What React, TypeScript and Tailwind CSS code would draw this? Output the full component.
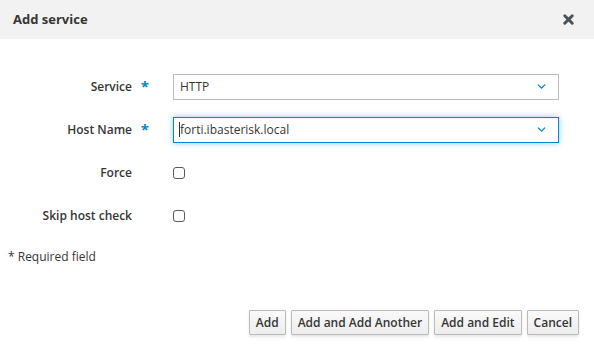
import { ChevronDown, X } from 'lucide-react'

function Select({ value, focused }: { value: string; focused?: boolean }) {
  return (
    <div
      className={
        focused
          ? 'flex h-[26px] w-[386px] items-center justify-between border border-[#0088ce] bg-white pl-[6px] pr-[10px] shadow-[0_0_6px_rgba(0,136,206,0.45)]'
          : 'flex h-[26px] w-[386px] items-center justify-between border border-[#bbbbbb] bg-white pl-[6px] pr-[10px]'
      }
    >
      <span className="relative text-[12px] text-[#363636]">
        {focused && <span className="absolute left-[-1px] top-[1px] h-[15px] w-px bg-[#363636]" />}
        {value}
      </span>
      <ChevronDown size={13} strokeWidth={2.6} className="text-[#0088ce]" />
    </div>
  )
}

function Checkbox() {
  return <span className="block h-[12px] w-[12px] rounded-[3px] border border-[#5a5a5a] bg-white" />
}

function Row({ label, required, children }: { label: string; required?: boolean; children: React.ReactNode }) {
  return (
    <div className="flex h-[43px] items-center">
      <div className="flex w-[132px] justify-end">
        <span className="relative text-[12px] font-semibold text-[#363636]">
          {label}
          {required && (
            <span className="absolute right-[-17px] top-[-3px] text-[15px] font-bold text-[#0088ce]">*</span>
          )}
        </span>
      </div>
      <div className="ml-[41px]">{children}</div>
    </div>
  )
}

function Btn({ children }: { children: React.ReactNode }) {
  return (
    <button className="h-[25px] rounded-[1px] border border-[#bbbbbb] bg-gradient-to-b from-[#fafafa] to-[#ededed] px-[6px] text-[12px] font-semibold text-[#363636] shadow-[0_2px_3px_rgba(3,3,3,0.1)]">
      {children}
    </button>
  )
}

export default function App() {
  return (
    <div className="flex h-[347px] w-[594px] flex-col bg-white font-['Open_Sans',sans-serif]">
      <div className="flex h-[39px] shrink-0 items-center justify-between bg-[#f2f2f2] pl-[13px] pr-[18px]">
        <span className="text-[13px] font-bold text-[#363636]">Add service</span>
        <X size={15} strokeWidth={4.8} className="text-[#4d5258]" />
      </div>

      <div className="pt-[26px]">
        <Row label="Service" required>
          <Select value="HTTP" />
        </Row>
        <Row label="Host Name" required>
          <Select value="forti.ibasterisk.local" focused />
        </Row>
        <Row label="Force">
          <Checkbox />
        </Row>
        <Row label="Skip host check">
          <Checkbox />
        </Row>
        <div className="flex h-[39px] items-center pl-[8px] text-[12px] text-[#363636]">* Required field</div>
      </div>

      <div className="mt-[34px] flex justify-end gap-[5px] pr-[15px]">
        <Btn>Add</Btn>
        <Btn>Add and Add Another</Btn>
        <Btn>Add and Edit</Btn>
        <Btn>Cancel</Btn>
      </div>
    </div>
  )
}
